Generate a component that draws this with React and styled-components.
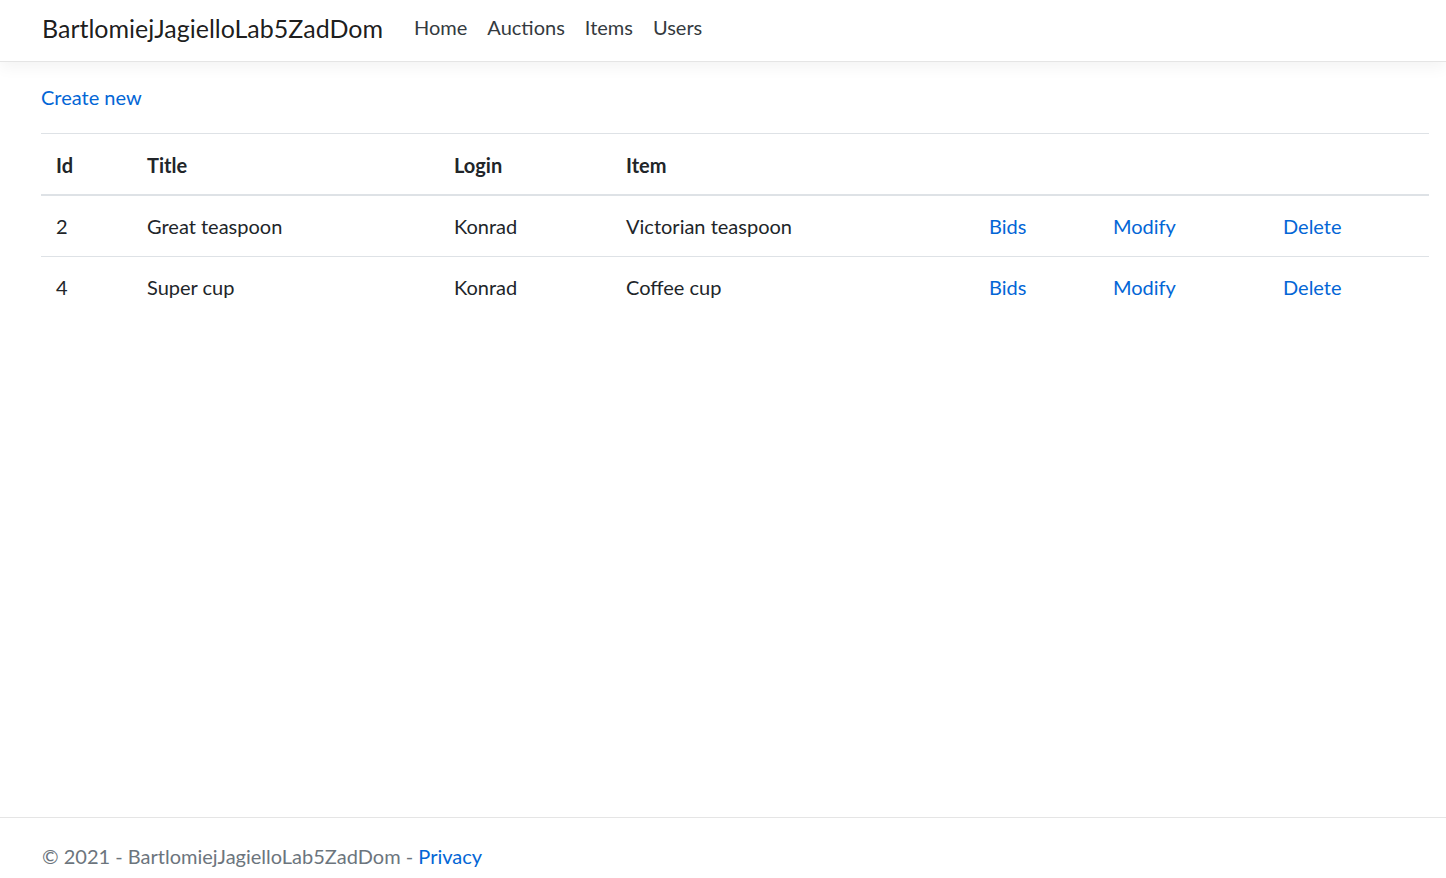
import React from 'react';
import styled, { createGlobalStyle } from 'styled-components';

const GlobalStyle = createGlobalStyle`
    html, body {
        margin: 0;
        padding: 0;
        background: #fff;
    }
    body {
        font-family: Lato, 'Open Sans', 'Liberation Sans', sans-serif;
        font-size: 20px;
        line-height: 30px;
        color: #212529;
    }
`;

const Page = styled.div`
    display: flex;
    flex-direction: column;
    min-height: 895px;
`;

const Nav = styled.nav`
    display: flex;
    align-items: flex-start;
    box-sizing: border-box;
    height: 62px;
    padding: 10px 17px 0 42px;
    background: #fff;
    border-bottom: 1px solid #e5e5e5;
    box-shadow: 0 5px 15px rgba(0, 0, 0, 0.05);
`;

const Brand = styled.a`
    font-size: 25px;
    line-height: 36px;
    color: rgba(0, 0, 0, 0.9);
    text-decoration: none;
    margin-right: 21px;
`;

const NavLinks = styled.ul`
    display: flex;
    list-style: none;
    margin: 2px 0 0 0;
    padding: 0;
`;

const NavLink = styled.a`
    display: block;
    padding: 0 10px;
    color: #343a40;
    text-decoration: none;
`;

const Main = styled.main`
    flex: 1;
    padding: 20px 17px 0 41px;
`;

const Link = styled.a`
    color: #0366d6;
    text-decoration: none;
    cursor: pointer;
`;

const CreateRow = styled.p`
    margin: 0 0 21px 0;
`;

const Table = styled.table`
    width: 100%;
    border-collapse: collapse;
    table-layout: fixed;
`;

const Col = styled.col`
    width: ${(p) => p.$w}px;
`;

const Th = styled.th`
    text-align: left;
    font-weight: 700;
    padding: 16px 15px 14px;
    border-top: 1px solid #dee2e6;
    border-bottom: 2px solid #dee2e6;
`;

const Td = styled.td`
    padding: 15px;
    border-top: ${(p) => (p.$first ? 'none' : '1px solid #dee2e6')};
    white-space: nowrap;
`;

const Footer = styled.footer`
    height: 77px;
    line-height: 77px;
    padding-left: 42px;
    border-top: 1px solid #e5e5e5;
    color: #6c757d;
`;

const columns = [91, 307, 172, 363, 124, 170, 161];

const auctions = [
    { id: 2, title: 'Great teaspoon', login: 'Konrad', item: 'Victorian teaspoon' },
    { id: 4, title: 'Super cup', login: 'Konrad', item: 'Coffee cup' },
];

const App = () => {
    return (
        <>
            <GlobalStyle />
            <Page>
                <Nav>
                    <Brand href="#">BartlomiejJagielloLab5ZadDom</Brand>
                    <NavLinks>
                        <li><NavLink href="#">Home</NavLink></li>
                        <li><NavLink href="#">Auctions</NavLink></li>
                        <li><NavLink href="#">Items</NavLink></li>
                        <li><NavLink href="#">Users</NavLink></li>
                    </NavLinks>
                </Nav>
                <Main>
                    <CreateRow>
                        <Link>Create new</Link>
                    </CreateRow>
                    <Table>
                        <colgroup>
                            {columns.map((w, i) => (
                                <Col key={i} $w={w} />
                            ))}
                        </colgroup>
                        <thead>
                            <tr>
                                <Th>Id</Th>
                                <Th>Title</Th>
                                <Th>Login</Th>
                                <Th>Item</Th>
                                <Th></Th>
                                <Th></Th>
                                <Th></Th>
                            </tr>
                        </thead>
                        <tbody>
                            {auctions.map((a, i) => (
                                <tr key={a.id}>
                                    <Td $first={i === 0}>{a.id}</Td>
                                    <Td $first={i === 0}>{a.title}</Td>
                                    <Td $first={i === 0}>{a.login}</Td>
                                    <Td $first={i === 0}>{a.item}</Td>
                                    <Td $first={i === 0}><Link>Bids</Link></Td>
                                    <Td $first={i === 0}><Link>Modify</Link></Td>
                                    <Td $first={i === 0}><Link>Delete</Link></Td>
                                </tr>
                            ))}
                        </tbody>
                    </Table>
                </Main>
                <Footer>
                    © 2021 - BartlomiejJagielloLab5ZadDom - <Link>Privacy</Link>
                </Footer>
            </Page>
        </>
    );
};

export default App;
